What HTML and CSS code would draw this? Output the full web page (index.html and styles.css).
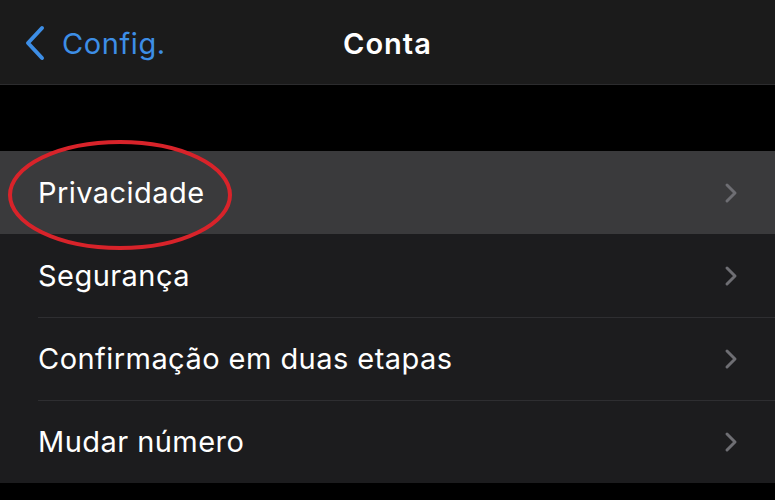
FILE: index.html
```html
<!DOCTYPE html>
<html>
<head>
    <title>Conta</title>
    <meta content="text/html;charset=utf-8" http-equiv="Content-Type">
    <link rel="stylesheet" href="styles.css">
</head>
<body>
<div class="screen">
    <div class="nav-bar">
        <a class="back-link">
            <svg class="back-icon" width="22" height="36" viewBox="0 0 22 36">
                <path d="M18 3 L4 18 L18 33" fill="none" stroke="#3d8ee6" stroke-width="4" stroke-linecap="round" stroke-linejoin="round"/>
            </svg>
            <span>Config.</span>
        </a>
        <div class="nav-title">Conta</div>
    </div>
    <div class="spacer"></div>
    <ul class="menu">
        <li class="menu-item active">
            <span class="label">Privacidade</span>
            <svg class="chevron" width="14" height="22" viewBox="0 0 14 22"><path d="M3 3 L11 11 L3 19" fill="none" stroke="#6e6e73" stroke-width="3" stroke-linecap="round" stroke-linejoin="round"/></svg>
            <svg class="circle-mark" width="240" height="116" viewBox="0 0 240 116">
                <ellipse cx="120" cy="57" rx="110" ry="53" fill="none" stroke="#d8232a" stroke-width="4"/>
            </svg>
        </li>
        <li class="menu-item">
            <span class="label">Segurança</span>
            <svg class="chevron" width="14" height="22" viewBox="0 0 14 22"><path d="M3 3 L11 11 L3 19" fill="none" stroke="#6e6e73" stroke-width="3" stroke-linecap="round" stroke-linejoin="round"/></svg>
        </li>
        <li class="menu-item">
            <span class="label">Confirmação em duas etapas</span>
            <svg class="chevron" width="14" height="22" viewBox="0 0 14 22"><path d="M3 3 L11 11 L3 19" fill="none" stroke="#6e6e73" stroke-width="3" stroke-linecap="round" stroke-linejoin="round"/></svg>
        </li>
        <li class="menu-item">
            <span class="label">Mudar número</span>
            <svg class="chevron" width="14" height="22" viewBox="0 0 14 22"><path d="M3 3 L11 11 L3 19" fill="none" stroke="#6e6e73" stroke-width="3" stroke-linecap="round" stroke-linejoin="round"/></svg>
        </li>
    </ul>
</div>
</body>
</html>
```

FILE: styles.css
```css
body {
    margin: 0;
    background: #000000;
    font-family: Inter, "Noto Sans", sans-serif;
    color: #ffffff;
}

.screen {
    width: 775px;
    height: 500px;
    overflow: hidden;
}

.nav-bar {
    position: relative;
    height: 85px;
    background: #1b1b1b;
    border-bottom: 1px solid #2c2c2e;
    display: flex;
    align-items: center;
    padding-top: 2px;
    box-sizing: border-box;
}

.back-link {
    display: flex;
    align-items: center;
    padding-left: 24px;
    color: #3d8ee6;
    font-size: 29px;
    letter-spacing: 0.6px;
}

.back-icon {
    margin-right: 16px;
}

.nav-title {
    position: absolute;
    left: 0;
    right: 0;
    text-align: center;
    font-size: 29px;
    font-weight: 600;
    letter-spacing: 1px;
    pointer-events: none;
}

.spacer {
    height: 66px;
}

.menu {
    list-style: none;
    margin: 0;
    padding: 0;
    background: #1c1c1e;
}

.menu-item {
    position: relative;
    height: 83px;
    display: flex;
    align-items: center;
    justify-content: space-between;
    padding: 0 37px 0 38px;
    font-size: 29px;
    letter-spacing: 0.45px;
}

.menu-item + .menu-item .label::before {
    content: "";
    position: absolute;
    top: 0;
    left: 38px;
    right: 0;
    border-top: 1px solid #2e2e31;
}

.menu-item.active {
    background: #3a3a3c;
}

.menu-item.active + .menu-item .label::before {
    display: none;
}

.circle-mark {
    position: absolute;
    left: 0;
    top: -13px;
}
```
